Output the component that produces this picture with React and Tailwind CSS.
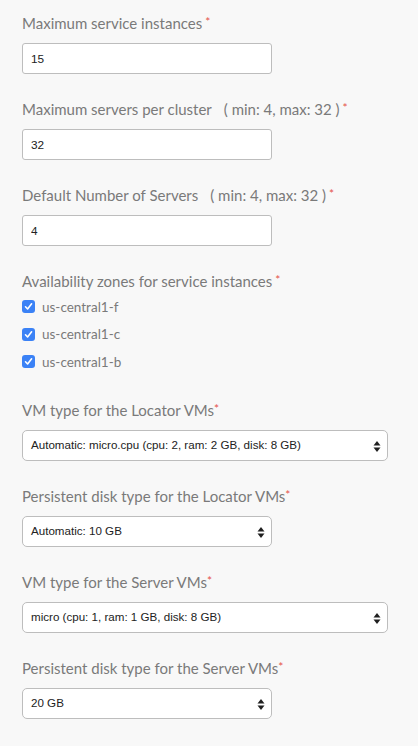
import { useState } from 'react';

const labelFont = { fontFamily: 'Lato, "Open Sans", sans-serif' };

function Required({ spaced }) {
  return (
    <span className={`relative -top-[3px] text-[12px] text-[#e5534b] ${spaced ? 'ml-[3px]' : ''}`}>*</span>
  );
}

function FieldLabel({ children, hint, spaced = true }) {
  return (
    <div
      className="h-[20px] text-[15px] leading-[20px] text-[#7a7a7a] whitespace-nowrap"
      style={labelFont}
    >
      {children}
      {hint ? <span className="ml-[12px]">{hint}</span> : null}
      <Required spaced={spaced} />
    </div>
  );
}

function TextField({ label, hint, value }) {
  const [val, setVal] = useState(value);
  return (
    <div className="mb-[25px]">
      <FieldLabel hint={hint}>{label}</FieldLabel>
      <input
        value={val}
        onChange={(e) => setVal(e.target.value)}
        className="mt-[10px] block h-[31px] w-[250px] rounded-[3px] border border-[#bdbdbd] bg-white px-[8px] text-[11.8px] text-[#222] outline-none font-['Liberation_Sans',Arial,sans-serif]"
      />
    </div>
  );
}

function SelectField({ label, value, wide }) {
  return (
    <div className="mb-[25px]">
      <FieldLabel spaced={false}>{label}</FieldLabel>
      <div
        className={`relative mt-[10px] flex h-[31px] items-center rounded-[5px] border border-[#bdbdbd] bg-white pl-[8px] text-[11.6px] text-[#222] font-['Liberation_Sans',Arial,sans-serif] ${
          wide ? 'w-[366px]' : 'w-[250px]'
        }`}
      >
        <span>{value}</span>
        <svg
          className="absolute right-[6px] top-[10px]"
          width="8"
          height="11"
          viewBox="0 0 8 11"
        >
          <path d="M4 0 L7.5 4.5 L0.5 4.5 Z" fill="#1f1f1f" />
          <path d="M4 11 L7.5 6.5 L0.5 6.5 Z" fill="#1f1f1f" />
        </svg>
      </div>
    </div>
  );
}

function Checkbox({ label }) {
  return (
    <div className="flex h-[27.5px] items-center">
      <span className="flex h-[13px] w-[13px] items-center justify-center rounded-[3px] bg-[#3b82f6]">
        <svg width="9" height="9" viewBox="0 0 9 9">
          <path d="M1.5 4.8 L3.6 7 L7.6 1.8" fill="none" stroke="white" strokeWidth="1.6" strokeLinecap="round" strokeLinejoin="round" />
        </svg>
      </span>
      <span className="ml-[7px] text-[13.5px] text-[#7a7a7a]" style={labelFont}>
        {label}
      </span>
    </div>
  );
}

export default function App() {
  return (
    <div className="min-h-[746px] bg-[#f8f8f8] px-[22px] pt-[13px]">
      <TextField label="Maximum service instances" value="15" />
      <TextField label="Maximum servers per cluster" hint="( min: 4, max: 32 )" value="32" />
      <TextField label="Default Number of Servers" hint="( min: 4, max: 32 )" value="4" />

      <div className="mb-[24px]">
        <FieldLabel>Availability zones for service instances</FieldLabel>
        <div className="mt-[2px]">
          <Checkbox label="us-central1-f" />
          <Checkbox label="us-central1-c" />
          <Checkbox label="us-central1-b" />
        </div>
      </div>

      <SelectField
        label="VM type for the Locator VMs"
        value="Automatic: micro.cpu (cpu: 2, ram: 2 GB, disk: 8 GB)"
        wide
      />
      <SelectField label="Persistent disk type for the Locator VMs" value="Automatic: 10 GB" />
      <SelectField
        label="VM type for the Server VMs"
        value="micro (cpu: 1, ram: 1 GB, disk: 8 GB)"
        wide
      />
      <SelectField label="Persistent disk type for the Server VMs" value="20 GB" />
    </div>
  );
}
